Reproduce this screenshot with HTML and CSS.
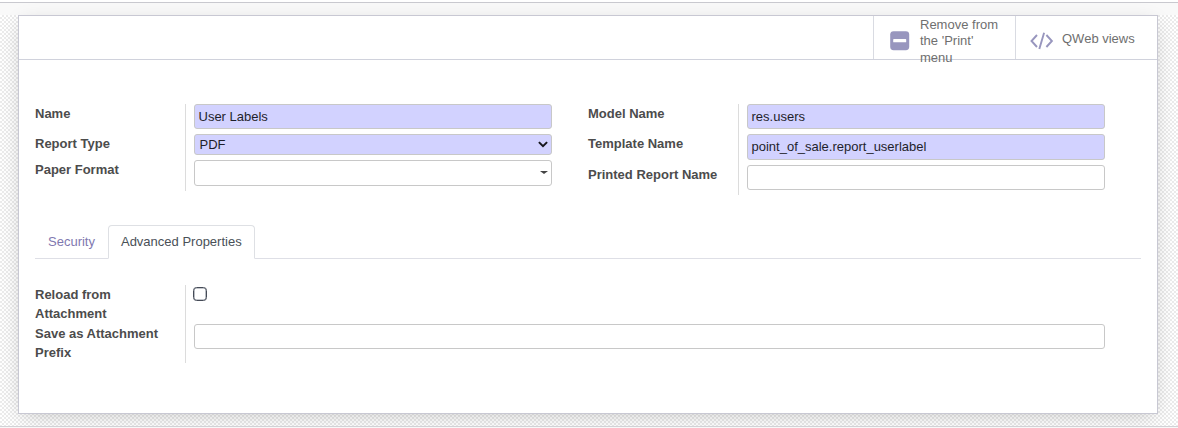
FILE: index.html
```html
<!DOCTYPE html>
<html lang="en">
<head>
<meta charset="utf-8">
<title>User Labels</title>
<link rel="stylesheet" href="styles.css">
</head>
<body>
<div class="control-edge"></div>
<main class="backdrop">
  <section class="sheet">
    <header class="button-box">
      <button class="stat stat-print">
        <svg class="icon-minus" width="20" height="20" viewBox="0 0 20 20"><rect x=".2" y=".2" width="19" height="19" rx="3.4" fill="#9896be"/><rect x="3.2" y="8.1" width="13" height="3.2" rx=".6" fill="#fff"/></svg>
        <span>Remove from the 'Print' menu</span>
      </button>
      <button class="stat stat-views">
        <svg class="icon-code" width="24" height="18" viewBox="0 0 24 18" fill="none" stroke="#9896be" stroke-width="1.9"><path d="M7 3 1.5 9 7 15M16.4 3l5.5 6-5.5 6M14.1.7 9.3 17.1"/></svg>
        <span>QWeb views</span>
      </button>
    </header>
    <div class="groups">
      <div class="group">
        <div class="labels"><label class="l-name">Name</label><label class="l-type">Report Type</label><label>Paper Format</label></div>
        <div class="fields">
          <div class="field required">User Labels</div>
          <div class="field required select">PDF<svg class="chevron" width="10" height="7" viewBox="0 0 10 7" fill="none" stroke="#16161d" stroke-width="2"><path d="M.9 1.1 5 5.2l4.1-4.1"/></svg></div>
          <div class="field tall combo"><span class="caret"></span></div>
        </div>
      </div>
      <div class="group">
        <div class="labels"><label class="l-name">Model Name</label><label class="l-template">Template Name</label><label>Printed Report Name</label></div>
        <div class="fields">
          <div class="field required">res.users</div>
          <div class="field required tall">point_of_sale.report_userlabel</div>
          <div class="field"></div>
        </div>
      </div>
    </div>
    <nav class="tabs"><a class="tab">Security</a><a class="tab active">Advanced Properties</a></nav>
    <div class="group wide">
      <div class="labels"><label class="l-reload">Reload from Attachment</label><label>Save as Attachment Prefix</label></div>
      <div class="fields">
        <span class="checkbox"></span>
        <div class="field"></div>
      </div>
    </div>
  </section>
</main>
<div class="bottom-edge"></div>
</body>
</html>
```
FILE: styles.css
```css
* { box-sizing: border-box; }
body {
  margin: 0;
  height: 428px;
  overflow: hidden;
  background: #fff;
  font: 13px/19.5px "Liberation Sans", Arial, sans-serif;
  color: #4c4c4c;
}
.control-edge {
  height: 13px;
  margin-top: 2px;
  border-top: 1px solid #c9c9cf;
  background: #f9f9f9;
}
.backdrop {
  height: 411px;
  padding: 0 20px 0 18px;
  background: repeating-conic-gradient(#ebebeb 0 25%, #fff 0 50%) 0 0 / 4px 4px;
}
.bottom-edge {
  position: relative;
  height: 2px;
  border-top: 1px solid #d2d2d6;
  background: #f8f8f8;
}
.sheet {
  position: relative;
  height: 399px;
  border: 1px solid #c8c8d3;
  background: #fff;
  box-shadow: 0 5px 20px -5px rgba(0, 0, 0, .22);
}
.button-box {
  display: flex;
  justify-content: flex-end;
  height: 44px;
  border-bottom: 1px solid #d0d2dc;
}
.stat {
  display: flex;
  align-items: center;
  height: 43px;
  padding: 0;
  border: 0;
  border-left: 1px solid #d9dbe2;
  background: none;
  font: 13px/16.5px "Liberation Sans", Arial, sans-serif;
  color: #6f6f6f;
  text-align: left;
}
.stat-print { width: 142px; padding-left: 16px; }
.stat-print span { width: 82px; margin: 8.4px 0 0 10px; }
.icon-minus { flex: none; margin-top: 7px; }
.stat-views { width: 142px; padding-left: 14px; }
.stat-views span { margin: 3px 0 0 8px; }
.icon-code { margin-top: 6px; }
.groups {
  display: flex;
  gap: 36px;
  height: 91px;
  margin: 44px 0 0 16px;
  align-items: flex-start;
}
.group { display: flex; width: 517px; }
.labels {
  width: 151px;
  padding-right: 20px;
  border-right: 1px solid #dcdcdc;
  font-weight: bold;
}
.labels label { display: block; white-space: nowrap; }
.l-name { height: 30px; }
.l-type { height: 26px; }
.l-template { height: 31px; }
.fields {
  flex: 1;
  display: flex;
  flex-direction: column;
  gap: 5px;
  padding: 0 0 5px 8px;
}
.field {
  height: 25px;
  padding: 0 3.5px;
  border: 1px solid #c8c8c8;
  border-radius: 3px;
  background: #fff;
  line-height: 24px;
  color: #1f1f2b;
}
.required { background: #d2d2ff; }
.tall { height: 26px; }
.select {
  display: flex;
  align-items: center;
  justify-content: space-between;
  height: 21px;
  padding: 0 3px 0 4.5px;
  line-height: 19px;
}
.combo {
  display: flex;
  align-items: center;
  justify-content: flex-end;
  padding: 0 3px;
}
.caret {
  margin-top: -1px;
  border: 4px solid transparent;
  border-top: 3.5px solid #444;
  border-bottom: 0;
}
.tabs {
  display: flex;
  height: 34px;
  margin: 30px 16px 26px;
  border-bottom: 1px solid #dedfe6;
}
.tab {
  height: 34px;
  padding: 6px 12px;
  border: 1px solid transparent;
  border-radius: 4px 4px 0 0;
  color: #7f78b0;
}
.tab.active {
  border-color: #dee0e4;
  border-bottom-color: #fff;
  background: #fff;
  color: #495057;
}
.wide { width: 1070px; height: 78px; margin-left: 16px; }
.wide .labels label { white-space: normal; line-height: 19px; }
.wide .l-reload { height: 39px; }
.wide .fields { gap: 23px; padding-top: 2px; }
.checkbox {
  width: 14px;
  height: 14px;
  margin-left: -1px;
  border: 1px solid #454b57;
  border-radius: 3.5px;
  box-shadow: inset 0 0 0 .6px #8b929c;
}
```
